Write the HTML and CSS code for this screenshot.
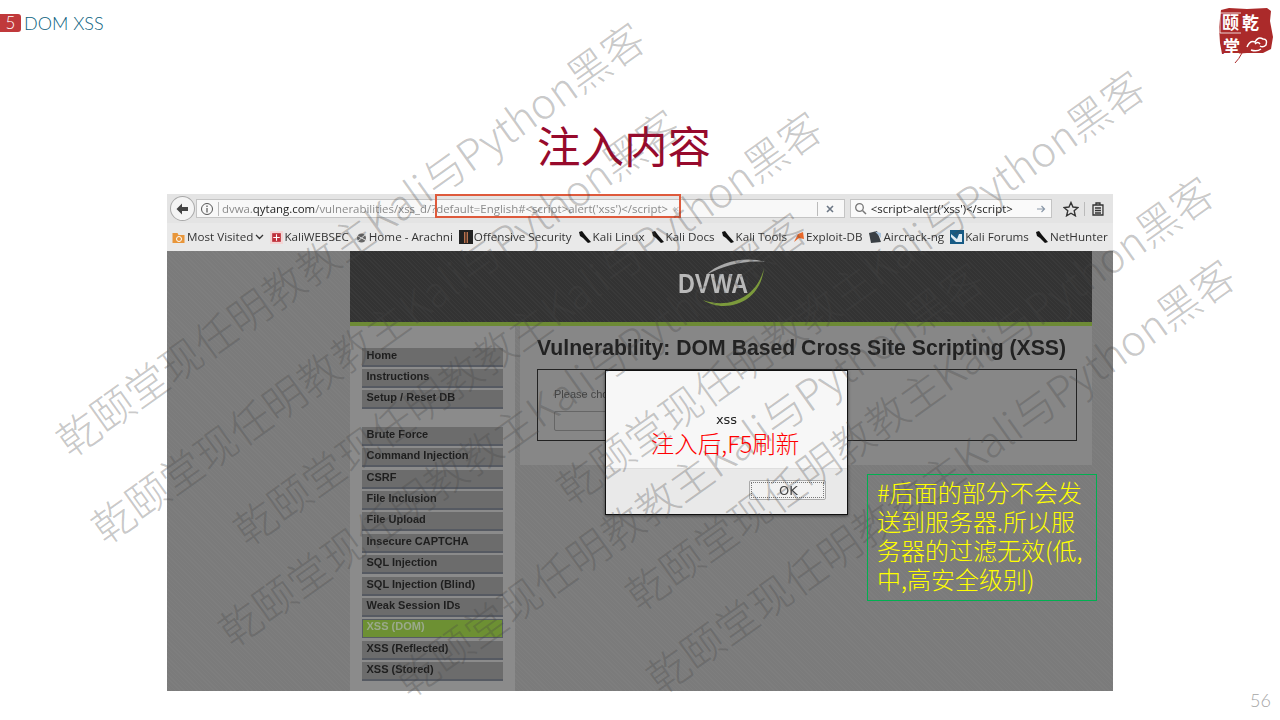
FILE: index.html
```html
<!DOCTYPE html>
<html>
<head>
  <title>DOM XSS</title>
  <link rel="stylesheet" href="styles.css">
</head>
<body>
  <div class="slide">
    <div class="topbar">
      <div class="crumb"><span class="num">5</span><span class="crumb-text">DOM XSS</span></div>
      <svg class="seal" width="58" height="56" viewBox="0 0 58 56">
        <path d="M4 3 L12 1 L30 2 L50 1 L54 4 L53 14 L56 30 L54 42 L46 46 L30 46 L16 47 L5 47 L3 36 L2 20 Z" fill="#ab2a2a"/>
        <path d="M3 6 H24 M3 6 V26 M3 26 H24" fill="none" stroke="#fff" stroke-width="0.8"/>
        <text x="25" y="22" class="seal-big">乾</text>
        <text x="5" y="22" class="seal-big">颐</text>
        <text x="6" y="46" class="seal-big">堂</text>
        <path d="M30 40 q3 -7 8 -5 q3 -6 8 -3 q5 0 3 6 q-3 3 -6 1 M34 43 q6 2 10 -1 M38 37 q3 -3 5 0" fill="none" stroke="#fff" stroke-width="1.5"/>
        <path d="M25 46 Q22 52 18 56" fill="none" stroke="#ab2a2a" stroke-width="1"/>
      </svg>
    </div>

    <h1 class="title">注入内容</h1>

    <div class="shot">
      <div class="toolbar">
        <span class="back">
          <svg width="14" height="14" viewBox="0 0 14 14"><path d="M7 1.5 L1.5 7 L7 12.5 L7 9 L13 9 L13 5 L7 5 Z" fill="#444"/></svg>
        </span>
        <div class="urlbar">
          <svg width="14" height="14" viewBox="0 0 14 14"><circle cx="7" cy="7" r="5.5" fill="none" stroke="#555"/><path d="M7 6 V10.5 M7 3.5 V5" stroke="#555" stroke-width="1.2"/></svg>
          <span class="sep"></span>
          <span class="url">dvwa.<b>qytang.com</b>/vulnerabilities/xss_d/?default=English#&lt;script&gt;alert('xss')&lt;/script&gt;<i>×</i></span>
          <span class="sep sep-end"></span>
          <svg class="clear" width="10" height="10" viewBox="0 0 10 10"><path d="M2 2 L8 8 M8 2 L2 8" stroke="#6b7684" stroke-width="1.6"/></svg>
        </div>
        <div class="searchbar">
          <svg width="13" height="13" viewBox="0 0 13 13"><circle cx="5.5" cy="5.5" r="3.8" fill="none" stroke="#777" stroke-width="1.3"/><path d="M8.5 8.5 L12 12" stroke="#777" stroke-width="1.5"/></svg>
          <span class="query">&lt;script&gt;alert('xss')&lt;/script&gt;</span>
          <svg class="go" width="10" height="10" viewBox="0 0 10 10"><path d="M1 5 H8 M5.5 2 L8.5 5 L5.5 8" fill="none" stroke="#8a98a8" stroke-width="1.2"/></svg>
        </div>
        <svg class="tool" width="16" height="16" viewBox="0 0 16 16"><path d="M8 1.5 L10 6 L15 6.5 L11.2 9.8 L12.4 14.8 L8 12.2 L3.6 14.8 L4.8 9.8 L1 6.5 L6 6 Z" fill="none" stroke="#333" stroke-width="1.4"/></svg>
        <span class="sep sep-tool"></span>
        <svg class="tool" width="14" height="14" viewBox="0 0 14 14"><path d="M2 3 H12 V13 H2 Z M5 1 H9 V3 H5 Z M4 6 H10 M4 8.5 H10 M4 11 H10" fill="none" stroke="#333" stroke-width="1.3"/></svg>
        <div class="highlight"></div>
      </div>

      <div class="bookmarks">
        <span class="bm bm-first"><svg width="15" height="14" viewBox="0 0 14 14"><path d="M1 3 H6 L7 5 H13 V13 H1 Z" fill="#e8963a"/><circle cx="7.5" cy="9" r="2.5" fill="none" stroke="#fff"/></svg>Most Visited<svg class="chev" width="9" height="6" viewBox="0 0 9 6"><path d="M1 1 L4.5 4.5 L8 1" fill="none" stroke="#333" stroke-width="1.3"/></svg></span>
        <span class="bm"><svg width="13" height="13" viewBox="0 0 12 12"><rect width="12" height="12" fill="#f3d5d5"/><rect x="2" y="2" width="8" height="8" fill="#c0303a"/><path d="M3 6 H9 M6 3 V9" stroke="#fff"/></svg>KaliWEBSEC</span>
        <span class="bm"><svg width="13" height="13" viewBox="0 0 13 13"><circle cx="6.5" cy="7" r="4.5" fill="#666"/><path d="M1 4 L12 10 M2 11 L11 3" stroke="#ddd"/></svg>Home - Arachni</span>
        <span class="bm"><svg width="14" height="14" viewBox="0 0 14 14"><rect width="14" height="14" fill="#222"/><rect x="5" y="2" width="4" height="11" fill="#b9724f"/><path d="M7 2 V13" stroke="#111"/></svg>Offensive Security</span>
        <span class="bm"><svg class="drag" width="14" height="14" viewBox="0 0 14 14"><path d="M1 2 L4 1 L7 5 L13 12 L10 13 L5 8 L2 6 Z" fill="#111"/></svg>Kali Linux</span>
        <span class="bm"><svg class="drag" width="14" height="14" viewBox="0 0 14 14"><path d="M1 2 L4 1 L7 5 L13 12 L10 13 L5 8 L2 6 Z" fill="#111"/></svg>Kali Docs</span>
        <span class="bm"><svg class="drag" width="14" height="14" viewBox="0 0 14 14"><path d="M1 2 L4 1 L7 5 L13 12 L10 13 L5 8 L2 6 Z" fill="#111"/></svg>Kali Tools</span>
        <span class="bm"><svg width="12" height="12" viewBox="0 0 12 12"><path d="M1 11 L5 3 L10 1 L11 8 L6 7 Z" fill="#e8682a"/></svg>Exploit-DB</span>
        <span class="bm"><svg width="14" height="14" viewBox="0 0 14 14"><path d="M1 3 L9 1 L13 12 L3 13 Z" fill="#3a3f44"/><path d="M7 1.5 L13 8 L13 3 Z" fill="#a9c3dc"/></svg>Aircrack-ng</span>
        <span class="bm"><svg width="14" height="14" viewBox="0 0 14 14"><rect width="14" height="14" fill="#175a84"/><path d="M1 4 L7 9 L9 4 H12 V12 H6 L1 7 Z" fill="#dfeaf2"/></svg>Kali Forums</span>
        <span class="bm"><svg class="drag" width="14" height="14" viewBox="0 0 14 14"><path d="M1 2 L4 1 L7 5 L13 12 L10 13 L5 8 L2 6 Z" fill="#111"/></svg>NetHunter</span>
      </div>

      <div class="page">
        <div class="wrap">
          <div class="dvwa-head">
            <svg width="100" height="60" viewBox="0 0 100 60">
              <path d="M31 49 C50 62 88 55 92 17 C85 48 55 58 31 49 Z" fill="#7c9a3c"/>
              <path d="M34 24 C48 10 75 5 93 11 C75 9 52 14 34 24 Z" fill="#a9a9a9"/>
              <text x="6" y="42" class="dvwa-text" textLength="70" lengthAdjust="spacingAndGlyphs">DVWA</text>
            </svg>
          </div>
          <div class="dvwa-body">
            <div class="menu">
              <ul>
                <li>Home</li>
                <li>Instructions</li>
                <li>Setup / Reset DB</li>
              </ul>
              <ul>
                <li>Brute Force</li>
                <li>Command Injection</li>
                <li>CSRF</li>
                <li>File Inclusion</li>
                <li>File Upload</li>
                <li>Insecure CAPTCHA</li>
                <li>SQL Injection</li>
                <li>SQL Injection (Blind)</li>
                <li>Weak Session IDs</li>
                <li class="on">XSS (DOM)</li>
                <li>XSS (Reflected)</li>
                <li>XSS (Stored)</li>
              </ul>
            </div>
            <div class="main">
              <div class="panel">
                <h2>Vulnerability: DOM Based Cross Site Scripting (XSS)</h2>
                <div class="vuln">
                  <p>Please choose a language:</p>
                  <div class="fake-select"></div>
                </div>
              </div>
            </div>
          </div>
        </div>
      </div>

      <div class="dialog">
        <div class="dialog-msg">xss</div>
        <div class="dialog-foot"><span class="ok"><span>OK</span></span></div>
      </div>
    </div>

    <div class="marks">
      <span class="mark m1">乾颐堂现任明教教主Kali与Python黑客</span>
      <span class="mark m2">乾颐堂现任明教教主Kali与Python黑客</span>
      <span class="mark m3">乾颐堂现任明教教主Kali与Python黑客</span>
      <span class="mark m4">乾颐堂现任明教教主Kali与Python黑客</span>
      <span class="mark m5">乾颐堂现任明教教主Kali与Python黑客</span>
      <span class="mark m6">乾颐堂现任明教教主Kali与Python黑客</span>
      <span class="mark m7">乾颐堂现任明教教主Kali与Python黑客</span>
      <span class="mark m8">乾颐堂现任明教教主Kali与Python黑客</span>
    </div>

    <div class="red-note">注入后,F5刷新</div>
    <div class="callout">#后面的部分不会发送到服务器.所以服务器的过滤无效(低,中,高安全级别)</div>
    <div class="pageno">56</div>
  </div>
</body>
</html>
```

FILE: styles.css
```css
* {
  box-sizing: border-box;
}

html, body {
  margin: 0;
  padding: 0;
}

body {
  background-color: white;
  font-family: "Noto Sans", "Noto Sans CJK SC", sans-serif;
}

.slide {
  position: relative;
  width: 1280px;
  height: 720px;
  overflow: hidden;
}

/* top strip */
.topbar {
  display: flex;
  justify-content: space-between;
  height: 120px;
  padding: 14px 5px 0 0;
}

.crumb {
  display: flex;
  align-items: center;
  height: 18px;
}

.num {
  width: 21px;
  height: 18px;
  background-color: #c0393b;
  border-radius: 0 3px 3px 0;
  color: white;
  font: 300 17px/18px Lato, sans-serif;
  text-align: center;
}

.crumb-text {
  margin-left: 3px;
  color: #0b5f80;
  font: 300 18px/18px Lato, sans-serif;
}

.seal {
  margin-top: -7px;
}

.seal-big {
  fill: white;
  font: bold 17px "Noto Sans CJK SC", sans-serif;
}

.title {
  margin: 0;
  height: 74px;
  padding-right: 32px;
  color: #970a2c;
  font: 400 43.5px/50px "Noto Sans CJK SC", sans-serif;
  text-align: center;
}

/* browser screenshot */
.shot {
  position: relative;
  width: 946px;
  height: 497px;
  margin-left: 167px;
  display: flex;
  flex-direction: column;
  background-color: #7b7b7b;
  filter: blur(0.4px);
}

.toolbar {
  position: relative;
  display: flex;
  align-items: center;
  height: 29px;
  padding: 0 8px 0 3px;
  background-color: #e4e4e4;
}

.back {
  display: flex;
  align-items: center;
  justify-content: center;
  width: 25px;
  height: 25px;
  background-color: #f4f4f4;
  border: 1px solid #a8a8a8;
  border-radius: 50%;
}

.urlbar {
  display: flex;
  align-items: center;
  width: 651px;
  height: 19px;
  margin-left: 1px;
  padding-left: 3px;
  background-color: #f8f8f8;
  border: 1px solid #c4c4c4;
}

.sep {
  width: 1px;
  height: 14px;
  margin: 0 3px 0 4px;
  background-color: #bbb;
}

.url {
  color: #8a8a8a;
  font: 11.45px/17px "Open Sans", sans-serif;
  white-space: nowrap;
}

.url b {
  color: #222;
  font-weight: 400;
}

.url i {
  margin-left: 5px;
  color: #bbb;
  font-style: normal;
}

.sep-end {
  margin-left: auto;
  margin-right: 0;
}

.clear {
  margin: 0 9px 0 7px;
}

.searchbar {
  display: flex;
  align-items: center;
  width: 203px;
  height: 19px;
  margin-left: 5px;
  padding: 0 5px 0 3px;
  background-color: #fafafa;
  border: 1px solid #c4c4c4;
}

.query {
  margin-left: 4px;
  color: #222;
  font: 11.4px/17px "Open Sans", sans-serif;
  white-space: nowrap;
}

.go {
  margin-left: auto;
}

.tool {
  margin-left: 11px;
}

.sep-tool {
  margin: 0 0 0 5px;
}

.tool + .sep-tool + .tool {
  margin-left: 6px;
}

.highlight {
  position: absolute;
  left: 268px;
  top: 0;
  width: 246px;
  height: 24px;
  border: 2px solid #de5a3c;
}

.bookmarks {
  display: flex;
  align-items: center;
  height: 28px;
  padding-left: 4px;
  background-color: #e9e9e9;
  color: #333;
  font: 11.65px/16px "Open Sans", sans-serif;
  white-space: nowrap;
}

.bm {
  display: flex;
  align-items: center;
  margin-left: 6px;
}

.bm-first {
  margin-left: 0;
}

.bm svg {
  margin-right: 1px;
}

.bm .chev {
  margin: 0 0 0 2px;
}

/* dvwa page under the dim layer */
.page {
  flex: 1;
  padding-left: 183px;
  background-color: #7b7b7b;
  background-image: repeating-linear-gradient(45deg, rgba(255, 255, 255, 0.025) 0 1px, transparent 1px 3px);
  overflow: hidden;
}

.wrap {
  width: 742px;
}

.dvwa-head {
  height: 75px;
  padding-left: 322px;
  background-color: #333;
  background-image: repeating-linear-gradient(45deg, rgba(255, 255, 255, 0.03) 0 1px, transparent 1px 3px);
  border-bottom: 4px solid #6d8a35;
}

.dvwa-text {
  fill: #b9b9b9;
  font: bold 27px "Liberation Sans", sans-serif;
}

.dvwa-body {
  display: flex;
}

.menu {
  width: 165px;
  padding: 21.5px 12px 0;
  background-color: #8b8b8b;
  height: 365px;
}

.menu ul {
  margin: 0 0 17.5px;
  padding: 0;
  list-style: none;
}

.menu li {
  height: 19px;
  margin-bottom: 2.4px;
  padding-left: 4.5px;
  background-color: #6c6c6c;
  border-bottom: 2px solid #565a62;
  color: #1e1e1e;
  font: bold 11px/15px "Liberation Sans", sans-serif;
}

.menu li.on {
  background-color: #6d9033;
  border: 1px solid #575c64;
  color: #9aa98c;
  padding-left: 3.5px;
  line-height: 13px;
}

.main {
  flex: 1;
  padding-left: 5px;
}

.panel {
  height: 139px;
  padding: 9px 0 0 17px;
  background-color: #878787;
}

.panel h2 {
  margin: 0;
  color: #222;
  font: bold 21.2px/26px "Liberation Sans", sans-serif;
  white-space: nowrap;
}

.vuln {
  width: 540px;
  height: 72px;
  margin-top: 8px;
  padding: 17px 16px 0;
  border: 1px solid #222;
}

.vuln p {
  margin: 0;
  color: #444;
  font: 11px/14px "Liberation Sans", sans-serif;
}

.fake-select {
  width: 80px;
  height: 20px;
  margin-top: 10px;
  border: 1px solid #666;
  border-radius: 2px;
}

.dialog {
  position: absolute;
  left: 438px;
  top: 176px;
  width: 243px;
  height: 145px;
  display: flex;
  flex-direction: column;
  background-color: #f7f7f7;
  border: 1px solid #111;
  box-shadow: 0 1px 3px rgba(0, 0, 0, 0.5);
}

.dialog-msg {
  flex: 1;
  padding-top: 41px;
  color: #222;
  font: 13px/16px "DejaVu Sans", sans-serif;
  text-align: center;
}

.dialog-foot {
  display: flex;
  justify-content: flex-end;
  height: 46px;
  padding: 11px 21px 0 0;
  background-color: #e9e9e9;
  border-top: 1px solid #dedede;
}

.ok {
  width: 77px;
  height: 20px;
  padding: 1px;
  background-color: #f2f2f2;
  border: 1px solid #aaa;
  border-radius: 2px;
  color: #444;
  font: 13px/15px "DejaVu Sans", sans-serif;
  text-align: center;
}

.ok span {
  display: block;
  height: 16px;
  padding-left: 2px;
  border: 1px dotted #777;
}

/* watermark lines, each one sits freely over the slide */
.marks {
  position: absolute;
  left: 0;
  top: 0;
  width: 1280px;
  height: 720px;
  pointer-events: none;
}

.mark {
  position: absolute;
  color: rgba(70, 70, 70, 0.3);
  font: 300 42px/42px "Noto Sans CJK SC", sans-serif;
  white-space: nowrap;
  transform: rotate(-35.5deg);
  transform-origin: 0 50%;
}

.m1 { left: 60px; top: 423px; }
.m2 { left: 95px; top: 510px; }
.m3 { left: 237px; top: 512px; }
.m4 { left: 222px; top: 613px; }
.m5 { left: 399px; top: 663px; }
.m6 { left: 560px; top: 471px; }
.m7 { left: 629px; top: 577px; }
.m8 { left: 650px; top: 660px; }

.red-note {
  position: absolute;
  left: 605px;
  top: 430px;
  width: 240px;
  color: #f00;
  font: 300 23.5px/26px "Noto Sans CJK SC", sans-serif;
  text-align: center;
}

.callout {
  position: absolute;
  left: 867px;
  top: 474px;
  width: 230px;
  height: 127px;
  padding: 2px 9px;
  border: 1px solid #00b050;
  color: #ff0;
  font: 300 24px/29px "Noto Sans CJK SC", sans-serif;
}

.pageno {
  position: absolute;
  right: 9px;
  top: 689px;
  color: #a6a6a6;
  font: 300 18px/22px Lato, sans-serif;
}
```
